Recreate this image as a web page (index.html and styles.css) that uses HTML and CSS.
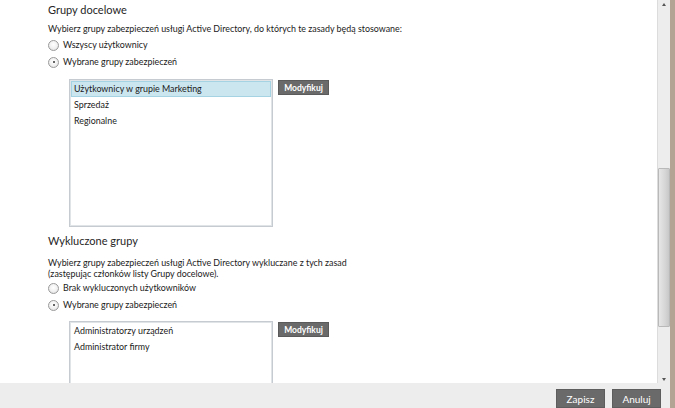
FILE: index.html
```html
<!DOCTYPE html>
<html lang="pl">
<head>
<meta charset="utf-8">
<link rel="stylesheet" href="styles.css">
</head>
<body>
<div class="window">
  <div class="main">
    <div class="content">
      <section class="group">
        <h2 class="heading">Grupy docelowe</h2>
        <p class="desc">Wybierz grupy zabezpieczeń usługi Active Directory, do których te zasady będą stosowane:</p>
        <div class="radios">
          <label class="radio"><span class="dot"></span>Wszyscy użytkownicy</label>
          <label class="radio"><span class="dot checked"></span>Wybrane grupy zabezpieczeń</label>
        </div>
        <div class="picker">
          <ul class="listbox">
            <li class="item selected">Użytkownicy w grupie Marketing</li>
            <li class="item">Sprzedaż</li>
            <li class="item">Regionalne</li>
          </ul>
          <button class="btn small">Modyfikuj</button>
        </div>
      </section>
      <section class="group second">
        <h2 class="heading">Wykluczone grupy</h2>
        <p class="desc">Wybierz grupy zabezpieczeń usługi Active Directory wykluczane z tych zasad<br>(zastępując członków listy Grupy docelowe).</p>
        <div class="radios tight">
          <label class="radio"><span class="dot"></span>Brak wykluczonych użytkowników</label>
          <label class="radio"><span class="dot checked"></span>Wybrane grupy zabezpieczeń</label>
        </div>
        <div class="picker lower">
          <ul class="listbox">
            <li class="item">Administratorzy urządzeń</li>
            <li class="item">Administrator firmy</li>
          </ul>
          <button class="btn small">Modyfikuj</button>
        </div>
      </section>
    </div>
    <div class="scrollbar">
      <div class="arrow up"></div>
      <div class="track">
        <div class="thumb"></div>
      </div>
      <div class="arrow down"></div>
    </div>
  </div>
  <div class="footer">
    <button class="btn">Zapisz</button>
    <button class="btn">Anuluj</button>
  </div>
</div>
</body>
</html>
```

FILE: styles.css
```css
* { box-sizing: border-box; }
html, body {
  margin: 0;
  padding: 0;
  width: 675px;
  height: 408px;
  overflow: hidden;
  background: #ffffff;
  font-family: "Lato", "Noto Sans", "DejaVu Sans", sans-serif;
  color: #1a1a1a;
}
.window {
  display: flex;
  flex-direction: column;
  height: 408px;
  border-right: 5px solid #b3a493;
  width: 675px;
}
.main {
  display: flex;
  height: 385px;
  overflow: hidden;
}
.content {
  flex: 1;
  padding-left: 48px;
  overflow: hidden;
}
.group { padding-top: 3px; }
.group.second { padding-top: 7px; }
.heading {
  margin: 0;
  font-size: 11px;
  font-weight: 400;
  line-height: 14px;
  color: #262626;
}
.desc {
  margin: 6px 0 0;
  font-size: 8.9px;
  line-height: 11px;
  color: #1a1a1a;
}
.group.second .desc { margin-top: 9px; }
.radios {
  display: flex;
  flex-direction: column;
  gap: 5px;
  margin-top: 5px;
}
.radios.tight { margin-top: 3px; gap: 5px; }
.radio {
  display: flex;
  align-items: center;
  gap: 4px;
  font-size: 8.9px;
  line-height: 12px;
  color: #1a1a1a;
}
.dot {
  position: relative;
  width: 11px;
  height: 11px;
  border-radius: 50%;
  border: 1px solid #9a9a9a;
  background: radial-gradient(circle at 50% 40%, #ffffff 0%, #f0f0f0 55%, #d4d4d4 100%);
}
.dot.checked::after {
  content: "";
  position: absolute;
  left: 3.5px;
  top: 3.5px;
  width: 2px;
  height: 2px;
  border-radius: 50%;
  background: #333;
}
.picker {
  display: flex;
  align-items: flex-start;
  gap: 5px;
  margin: 11px 0 0 21px;
}
.picker.lower { margin-top: 10px; }
.listbox {
  list-style: none;
  margin: 0;
  padding: 1px;
  width: 204px;
  height: 148px;
  border: 1px solid #c6cbd1;
  box-shadow: inset 0 0 0 1px #e1e4e7;
  background: #fff;
}
.item {
  height: 16px;
  padding: 0 2px;
  font-size: 8.9px;
  line-height: 13px;
  color: #1a1a1a;
  border: 1px solid transparent;
}
.item.selected {
  background: #cce6f0;
  border-color: #a5d3e3;
}
.btn {
  font-family: inherit;
  border: 1px solid #5a5a5a;
  background: #6a6a6a;
  color: #ffffff;
  font-size: 9px;
  font-weight: 700;
  padding: 0;
  cursor: default;
}
.btn.small {
  width: 51px;
  height: 15px;
  line-height: 12px;
  margin-top: 1px;
  font-size: 8.5px;
}
.scrollbar {
  width: 13px;
  height: 385px;
  background: #ededed;
  border-left: 1px solid #dcdcdc;
  display: flex;
  flex-direction: column;
}
.arrow {
  height: 14px;
  position: relative;
}
.arrow::after {
  content: "";
  position: absolute;
  left: 4px;
  width: 0;
  height: 0;
  border-left: 2.5px solid transparent;
  border-right: 2.5px solid transparent;
}
.arrow.up::after { top: 3px; border-bottom: 3px solid #555; }
.arrow.down::after { top: 7px; border-top: 3px solid #555; }
.track {
  flex: 1;
  padding-top: 154px;
}
.thumb {
  height: 159px;
  width: 12px;
  border: 1px solid #b9b9b9;
  border-radius: 1px;
  background: linear-gradient(to right, #e6e6e6, #d6d6d6 60%, #c8c8c8);
}
.footer {
  flex: 1;
  display: flex;
  justify-content: flex-end;
  align-items: flex-start;
  gap: 7px;
  padding: 6px 9px 0 0;
  background: #ededed;
}
.footer .btn {
  width: 49px;
  height: 19px;
  font-size: 10px;
  font-weight: 400;
  border-color: #5d5d5d;
  background: #6a6a6a;
}
```
